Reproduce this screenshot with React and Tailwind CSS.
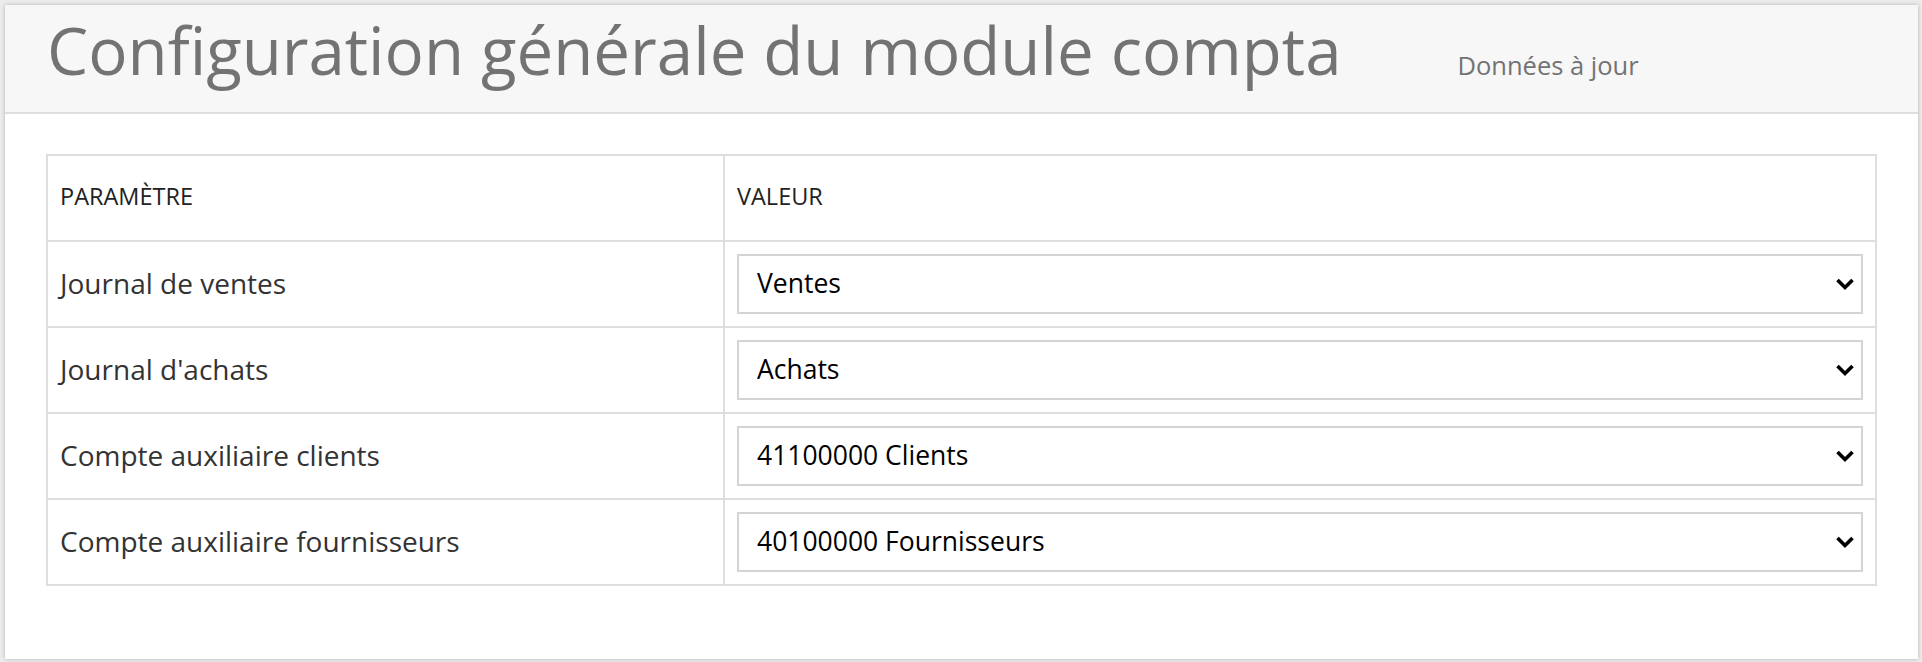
const rows = [
  { label: 'Journal de ventes', value: 'Ventes', options: ['Ventes', 'Achats'] },
  { label: "Journal d'achats", value: 'Achats', options: ['Achats', 'Ventes'] },
  { label: 'Compte auxiliaire clients', value: '41100000 Clients', options: ['41100000 Clients'] },
  { label: 'Compte auxiliaire fournisseurs', value: '40100000 Fournisseurs', options: ['40100000 Fournisseurs'] },
];

const Chevron = () => (
  <svg width="20" height="13" viewBox="0 0 20 13" className="pointer-events-none absolute right-[8px] top-1/2 -translate-y-1/2">
    <polyline points="2.5,2.5 10,10 17.5,2.5" fill="none" stroke="#000" strokeWidth="3.6" />
  </svg>
);

const ValueSelect = ({ value, options }) => (
  <div className="relative">
    <select
      defaultValue={value}
      className="w-full h-[60px] appearance-none bg-white border-2 border-[#d4d4d4] pl-[18px] pr-12 text-[26.5px] text-black outline-none"
    >
      {options.map((o) => (
        <option key={o}>{o}</option>
      ))}
    </select>
    <Chevron />
  </div>
);

export default function App() {
  return (
    <div className="min-h-[662px] bg-[#ececec] pt-[5px] pl-[5px] pr-[4px] pb-[3px] font-['Open_Sans',sans-serif]">
      <div className="bg-white shadow-[0_0_4px_rgba(0,0,0,0.25)] h-[654px]">
        {/* Header */}
        <div className="h-[109px] bg-[#f7f7f7] border-b-2 border-[#dedede] flex items-baseline pl-[42px] pt-[2px]">
          <h1 className="text-[65.4px] leading-[86px] text-[#737373]">
            Configuration générale du module compta
          </h1>
          <span className="ml-[116px] text-[25.5px] text-[#737373]">Données à jour</span>
        </div>

        {/* Parameters table */}
        <div className="px-[41px] pt-[40px]">
          <table className="w-full border-collapse border-2 border-[#dedede]">
            <thead>
              <tr className="h-[86px]">
                <th className="w-[677px] border-2 border-[#dedede] px-3 pb-[3px] text-left font-normal text-[23.5px] text-[#222]">
                  PARAMÈTRE
                </th>
                <th className="border-2 border-[#dedede] px-3 pb-[3px] text-left font-normal text-[23.5px] text-[#222]">
                  VALEUR
                </th>
              </tr>
            </thead>
            <tbody>
              {rows.map((r) => (
                <tr key={r.label} className="h-[86px]">
                  <td className="border-2 border-[#dedede] px-3 pb-[2px] text-[28px] text-[#333]">{r.label}</td>
                  <td className="border-2 border-[#dedede] p-3">
                    <ValueSelect value={r.value} options={r.options} />
                  </td>
                </tr>
              ))}
            </tbody>
          </table>
        </div>
      </div>
    </div>
  );
}
